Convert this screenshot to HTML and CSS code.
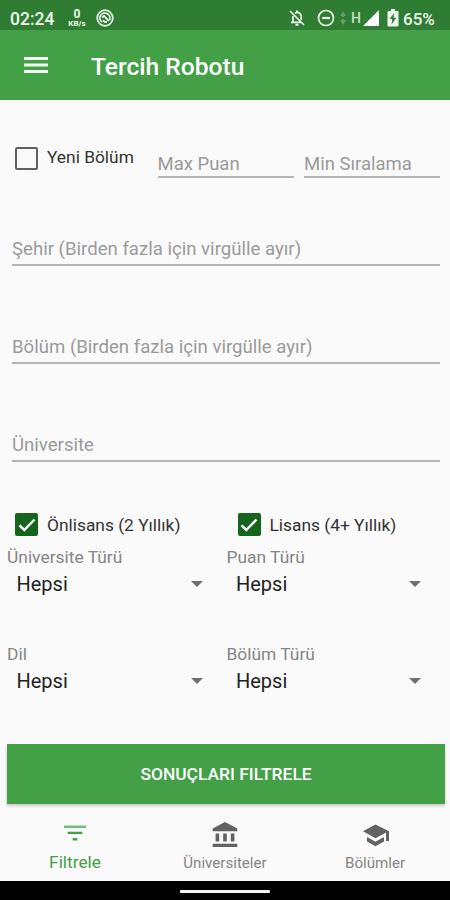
FILE: index.html
```html
<!DOCTYPE html>
<html lang="tr">
<head>
<meta charset="utf-8">
<title>Tercih Robotu</title>
<link rel="stylesheet" href="styles.css">
</head>
<body>
<div class="screen">
  <div class="status">
    <span class="clock">02:24</span>
    <span class="speed"><b>0</b><small>KB/s</small></span>
    <svg class="ring" width="18" height="18" viewBox="0 0 18 18" fill="none" stroke="#f0f8ee"><circle cx="9" cy="9" r="7.8" stroke-width="1.7"/><path d="M6 13.1A5 5 0 1 1 13.3 11.4" stroke-width="1.7"/><path d="M6.2 8.5 8 7l4.7 4.9M7 11.5l2 1.5h2" stroke-width="1.8"/></svg>
    <svg class="bell" width="18" height="18" viewBox="0 0 18 18" fill="none" stroke="#edf7eb" stroke-width="1.7"><path d="M2 2l14 14M5 7v6M3 13.3h10M7 4.3c3-2 6.200 0 6.200 3.500V11"/><path d="M9 1.500v2M7.500 15.800h3" stroke-width="2"/></svg>
    <svg class="dnd" width="18" height="18" viewBox="0 0 18 18" fill="none" stroke="#edf7eb" stroke-width="1.700"><circle cx="9" cy="9" r="7.500"/><path d="M5 9h8" stroke-width="2.200"/></svg>
    <svg class="arrows" width="6" height="14" viewBox="0 0 6 14" fill="#669d66"><path d="M3 0l3 5H4v1H2V5H0zM3 14l3-5H4V8H2v1H0z"/></svg>
    <span class="net">H</span>
    <svg class="signal" width="16" height="16" viewBox="0 0 16 16" fill="#fff"><path d="M16 0v16H0z"/></svg>
    <svg class="battery" width="12" height="18" viewBox="0 0 12 18"><path d="M4 0h4v2h2.500q1 0 1 1v13.500q0 1-1 1h-9q-1 0-1-1V3q0-1 1-1H4z" fill="#edf7eb"/><path d="M7 4 2.700 10h2.600L4.500 15.500 9.300 8.700H6.600z" fill="#2e7d32"/></svg>
    <span class="percent">65%</span>
  </div>
  <header class="appbar">
    <svg width="24" height="18" viewBox="0 0 24 18" fill="#f2faf1"><path d="M0 1h24v3H0zM0 7.500h24v3H0zM0 14h24v3H0z"/></svg>
    <h1>Tercih Robotu</h1>
  </header>
  <main>
    <div class="top">
      <label class="check"><i class="box"></i><span>Yeni Bölüm</span></label>
      <div class="field">Max Puan</div>
      <div class="field">Min Sıralama</div>
    </div>
    <div class="field wide">Şehir (Birden fazla için virgülle ayır)</div>
    <div class="field wide">Bölüm (Birden fazla için virgülle ayır)</div>
    <div class="field wide">Üniversite</div>
    <div class="checks">
      <label class="check"><i class="box on"><svg width="22" height="22" viewBox="0 0 22 22"><path d="M3.500 11.300 8.300 16 18.500 5.500" fill="none" stroke="#fff" stroke-width="2.500"/></svg></i><span>Önlisans (2 Yıllık)</span></label>
      <label class="check"><i class="box on"><svg width="22" height="22" viewBox="0 0 22 22"><path d="M3.500 11.300 8.300 16 18.500 5.500" fill="none" stroke="#fff" stroke-width="2.500"/></svg></i><span>Lisans (4+ Yıllık)</span></label>
    </div>
    <div class="selects">
      <div class="select"><span class="label">Üniversite Türü</span><div class="value"><span>Hepsi</span><i class="caret"></i></div></div>
      <div class="select"><span class="label">Puan Türü</span><div class="value"><span>Hepsi</span><i class="caret"></i></div></div>
      <div class="select"><span class="label">Dil</span><div class="value"><span>Hepsi</span><i class="caret"></i></div></div>
      <div class="select"><span class="label">Bölüm Türü</span><div class="value"><span>Hepsi</span><i class="caret"></i></div></div>
    </div>
    <button class="submit"><span>SONUÇLARI FILTRELE</span></button>
  </main>
  <nav>
    <a class="active"><svg width="30" height="30" viewBox="0 0 30 30" fill="#43a047"><path d="M4 5.500h22v2.600H4z" opacity=".7"/><path d="M7.700 11.700h14.600v2.400H7.700zM12.700 18h4.600v2.400h-4.600z"/></svg><span>Filtrele</span></a>
    <a><svg width="30" height="30" viewBox="0 0 30 30" fill="#626262"><path d="M15 2 27.300 8.500v2.800H2.700V8.500zM5.600 13.500h3.600v8H5.600zM13.200 13.500h3.600v8h-3.600zM20.800 13.500h3.600v8h-3.600zM2.700 23.800h24.600v3.300H2.700z"/></svg><span>Üniversiteler</span></a>
    <a><svg width="30" height="30" viewBox="0 0 30 30" fill="#626262"><path d="M15.500 4.500 3 11.300 15.500 18.300 26 12.500v8.500h3v-9.700zM7 17v4.500l8.500 4.700 8.500-4.700V17l-8.500 4.700z"/></svg><span>Bölümler</span></a>
  </nav>
  <div class="gesture"><i></i></div>
</div>
</body>
</html>
```
FILE: styles.css
```css
* { box-sizing: border-box; }
body { margin: 0; font-family: Roboto, "Liberation Sans", sans-serif; background: #fafafa; }
.screen { width: 450px; height: 900px; display: flex; flex-direction: column; overflow: hidden; white-space: nowrap; }
svg { display: block; flex: none; }
.status { height: 30px; background: #2e7d32; color: #f0f8ee; display: flex; align-items: center; padding: 6px 15px 0 10px; font-weight: 500; }
.clock { font-size: 17.5px; width: 45px; padding-top: 1px; }
.speed { width: 20px; margin-left: 12px; display: flex; flex-direction: column; align-items: center; }
.speed b { font-size: 12px; line-height: 12px; font-weight: 700; }
.speed small { font-size: 8px; line-height: 8px; font-weight: 700; }
.ring { margin-left: 9px; }
.bell { margin-left: auto; }
.dnd { margin-left: 11px; }
.arrows { margin-left: 5px; }
.net { font-size: 14px; margin-left: 5px; color: #cce2ca; width: 10px; }
.signal { margin-left: 2px; }
.battery { margin-left: 8px; }
.percent { font-size: 17px; margin-left: 4px; width: 32px; padding-top: 1px; }
.appbar { height: 70px; background: #43a047; color: #fff; display: flex; align-items: center; padding: 3px 0 0 24px; }
.appbar svg { margin-top: -3px; }
h1 { margin: 0 0 0 43px; font-size: 24.6px; font-weight: 500; line-height: 28px; }
main { height: 709px; padding: 0 5px 0 7px; }
.top { height: 78px; margin: 0 5px 0 8px; display: grid; grid-template-columns: 132px 136px 136px; column-gap: 10.5px; align-items: end; }
.check { display: flex; align-items: center; gap: 9px; font-size: 17.35px; color: #333; }
.top .check { height: 40px; }
.top .check span { margin-top: -2px; }
.box { width: 23px; height: 23px; border: 2px solid #606060; border-radius: 2px; flex: none; }
.box.on { border: 0; background: #17641d; padding: 0.5px; }
.field { height: 26px; border-bottom: 2px solid #b5b5b5; font-size: 18.6px; line-height: 18px; color: #9a9a9a; }
.top .field { height: 28px; line-height: 28px; font-size: 18.5px; }
.wide { margin: 62px 5px 0 5px; }
.wide + .wide { margin-top: 72px; }
.checks { margin: 51px 0 0 8px; height: 23px; display: grid; grid-template-columns: 222.5px 1fr; }
.selects { display: grid; grid-template-columns: 219.5px 1fr; grid-auto-rows: 96.5px; margin-top: 11px; }
.label { display: block; font-size: 17.4px; line-height: 20px; color: #858585; }
.value { display: flex; align-items: center; height: 34px; padding: 0 24px 0 9.5px; font-size: 20px; color: #222; }
.caret { margin-left: auto; border: 6px solid transparent; border-top-color: #707070; border-bottom: 0; }
.submit { display: flex; align-items: center; justify-content: center; width: 438px; height: 60px; margin-top: 4px; border: 0; background: #43a047; color: #fff; font: 500 17.4px Roboto, sans-serif; box-shadow: 0 2px 3px #0003; }
nav { height: 72px; display: grid; grid-template-columns: repeat(3, 1fr); }
nav a { display: flex; flex-direction: column; align-items: center; padding-top: 11px; color: #858585; font-size: 15.1px; }
nav span { line-height: 22px; margin-top: 2px; }
nav .active { color: #43a047; font-size: 17.3px; }
nav .active span { margin-top: 1px; }
.gesture { height: 19px; background: #000; display: flex; justify-content: center; padding-top: 9px; }
.gesture i { width: 90px; height: 3px; background: #f4f4f4; border-radius: 1px; }
```
